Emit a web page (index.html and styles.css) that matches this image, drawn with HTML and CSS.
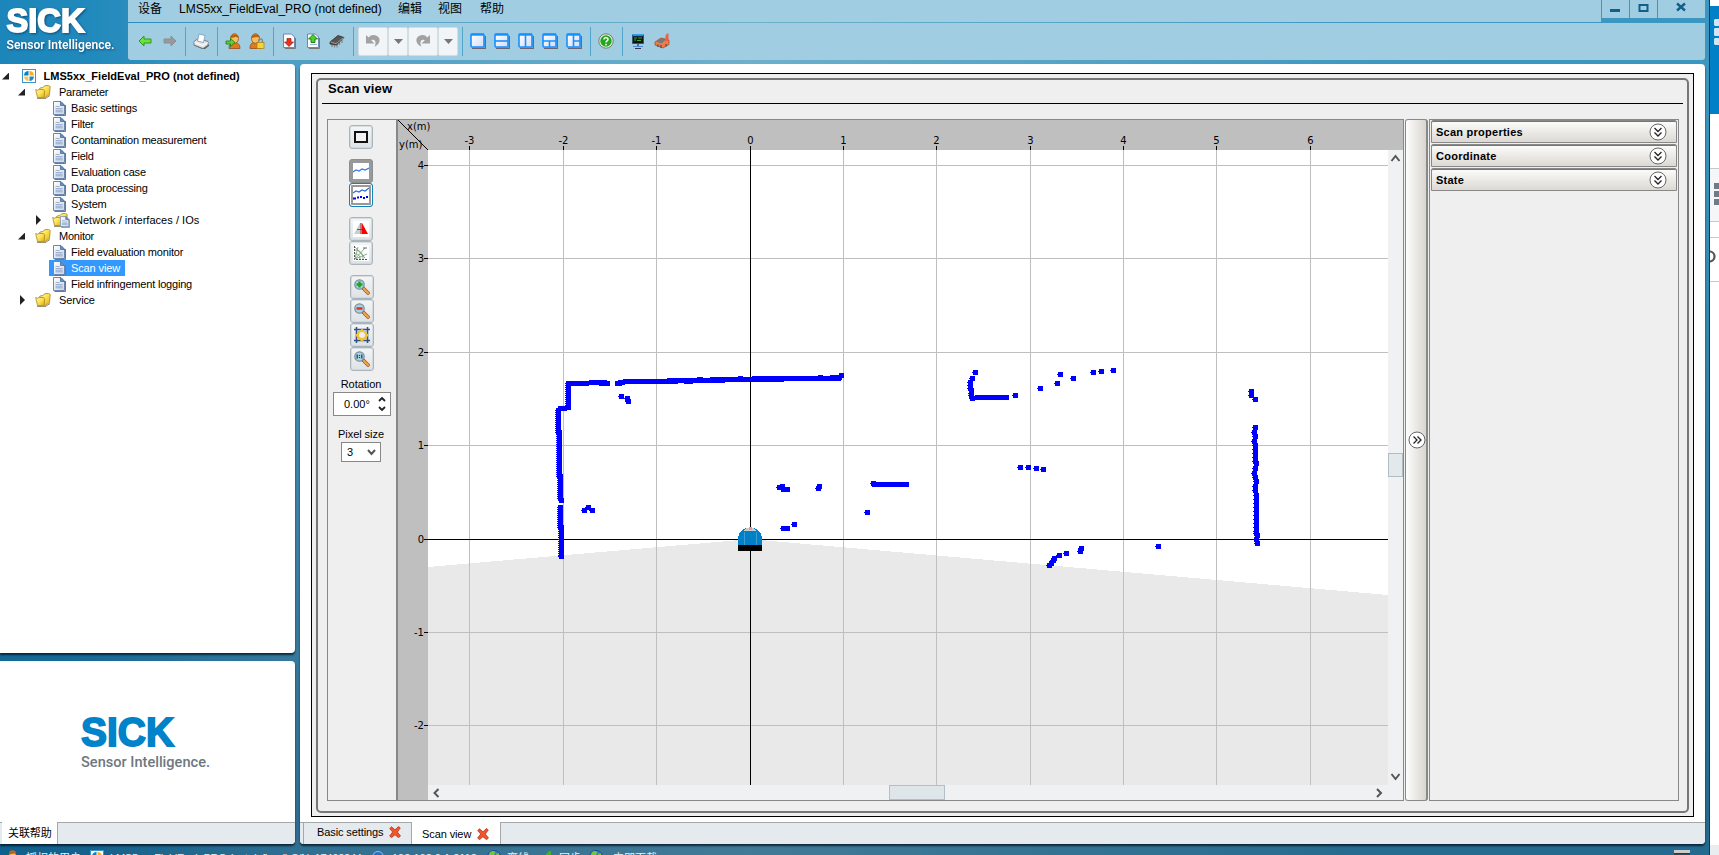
FILE: index.html
```html
<!DOCTYPE html>
<html lang="zh">
<head>
<meta charset="utf-8">
<title>LMS5xx_FieldEval_PRO</title>
<link rel="stylesheet" href="styles.css">
</head>
<body>
<svg class="defs" aria-hidden="true">
  <defs>
    <linearGradient id="gFolder" x1="0" y1="0" x2="1" y2="1"><stop offset="0" stop-color="#fffcc8"/><stop offset=".5" stop-color="#fbe04a"/><stop offset="1" stop-color="#d8aa1c"/></linearGradient>
    <linearGradient id="gPane" x1="0" y1="0" x2="1" y2="1"><stop offset="0" stop-color="#fff"/><stop offset="1" stop-color="#d4dcf8"/></linearGradient>
    <linearGradient id="gDoc" x1="0" y1="0" x2="1" y2="1"><stop offset="0" stop-color="#fff"/><stop offset="1" stop-color="#c9d6ea"/></linearGradient>
    <symbol id="doc" viewBox="0 0 13 15"><path d="M1.500 14.500h11V4" fill="none" stroke="#777" stroke-width="1"/><path d="M.5.5h7.500l3.500 3.500v9.500h-11z" fill="url(#gDoc)" stroke="#6d87ad"/><path d="M7.500.5v4h4z" fill="#6c8fc0" stroke="#4f6f9c" stroke-width=".8"/><path d="M2.500 5.500h4M2.500 7.500h7" stroke="#9fb2d0"/><path d="M2.500 8.500h7v3h-7z" fill="#a9b9d8"/></symbol>
    <symbol id="folder" viewBox="0 0 16 14"><path d="M2 13.500l8 .3 5-3.300" fill="none" stroke="#8d8d8d" stroke-width="1"/><path d="M4 5l1-2 3-.5 1.500-1.700 4-.5 1.700 1.200-.7 8-5 3.500-6-.5z" fill="url(#gFolder)" stroke="#a8841c" stroke-width=".8"/><path d="M.7 4.500l2 .8 1.300-1 4.500.4 1.200 1L9 13l-6.500-.5z" fill="url(#gFolder)" stroke="#a8841c" stroke-width=".8"/></symbol>
    <symbol id="device" viewBox="0 0 14 14"><rect x=".5" y=".5" width="13" height="13" fill="#fff" stroke="#3b93c8"/><path d="M6.500 6.500V2a4.500 4.500 0 0 0-4.500 4.500z" fill="#0083c7"/><path d="M7.500 6.500V2a4.500 4.500 0 0 1 4.500 4.500z" fill="#f5b11c"/><path d="M6.500 7.500V12A4.500 4.500 0 0 1 2 7.500z" fill="#f5c75a"/><path d="M7.500 7.500V12A4.500 4.500 0 0 0 12 7.500z" fill="#2f82c0"/></symbol>
    <symbol id="user" viewBox="0 0 16 16"><path d="M2 15.500c0-5 2-6 5-6s6 1 6 6z" fill="#e07a22" stroke="#8c4410" stroke-width=".7"/><ellipse cx="7.500" cy="5.500" rx="4" ry="4.800" fill="#f6c05a" stroke="#8c4410" stroke-width=".7"/><path d="M3.500 5C3.500 0 11.500 0 11.500 5 9 2.500 6 5 3.500 5z" fill="#b86018"/></symbol>
    <symbol id="lens" viewBox="0 0 16 16"><path d="M9 9l5 5" stroke="#a45a20" stroke-width="3.600" stroke-linecap="round"/><path d="M10 10l4 4" stroke="#f7a248" stroke-width="2.200" stroke-linecap="round"/><circle cx="5.500" cy="5.500" r="4.700" fill="#a9d2e6" stroke="#7d8f9b" stroke-width="1.200"/></symbol>
    <symbol id="close" viewBox="0 0 12 12"><path d="M2.500 .8l3.500 3L9.500.5 11.300 2 8.300 6l3.200 4-2 1.700L6 8.700l-3.500 3L.6 10 3.700 6 .7 2.500z" fill="#f2552c" stroke="#a92a10" stroke-width=".7"/></symbol>
    <symbol id="globe" viewBox="0 0 14 14"><circle cx="7" cy="7" r="6.500" fill="#2f7fd0" stroke="#1a4c86"/><path d="M2 4c2-4 5-3 6-2s-2 4-3 5-3 0-3-3zM9 4l3-1v4l-3 1z" fill="#74c442"/></symbol>
    <symbol id="chev2" viewBox="0 0 18 18"><circle cx="9" cy="9" r="8" fill="#fff" stroke="#666"/><path d="M5.500 5l3.500 3.500L12.500 5M5.500 9.500L9 13l3.500-3.500" fill="none" stroke="#222" stroke-width="1.300"/></symbol>
    <symbol id="frame" viewBox="0 0 16 16"><path d="M2 15.300h13.300V3" fill="none" stroke="#667" stroke-width="1.300"/><rect x="1" y="1" width="13" height="13" rx="1" fill="url(#gPane)" stroke="#1590ff" stroke-width="1.600"/><path d="M1 1.700h13" stroke="#1590ff" stroke-width="2"/></symbol>
  </defs>
</svg>

<div class="desktop">
  <div class="window">
    <header class="header">
      <div class="brand">
        <svg width="128" height="64" viewBox="0 0 128 64">
          <g class="brand-shadow"><text x="6.500" y="32" class="sick" font-size="33.500" textLength="78" lengthAdjust="spacingAndGlyphs">SICK</text>
          <text x="6.500" y="49" class="tag" font-size="13" textLength="108" lengthAdjust="spacingAndGlyphs">Sensor Intelligence.</text></g>
        </svg>
      </div>
      <div class="bars">
        <div class="menu-row">
          <nav class="menu">
            <span class="m1">设备</span><span class="m2">LMS5xx_FieldEval_PRO (not defined)</span><span class="m3">编辑</span><span class="m4">视图</span><span>帮助</span>
          </nav>
          <div class="winbtns">
            <span class="wb"><svg width="27" height="18"><path d="M8 9h10v3H8z" fill="#10608a"/></svg></span>
            <span class="wb"><svg width="27" height="18"><path d="M9.500 5h8v6h-8z" fill="none" stroke="#10608a" stroke-width="2"/></svg></span>
            <span class="wb wide"><svg width="47" height="18"><path d="M19 3.500l8 7M27 3.500l-8 7" stroke="#10608a" stroke-width="2.400"/></svg></span>
          </div>
        </div>
        <div class="toolbar">
          <span class="ti"><svg width="16" height="14"><path d="M2 7l5-5v3h7v4H7v3z" fill="#6fe03a" stroke="#2a9a1c"/></svg></span>
          <span class="ti fwd"><svg width="16" height="14"><path d="M14 7L9 2v3H2v4h7v3z" fill="#999" stroke="#8a8f92"/></svg></span>
          <i class="sep"></i>
          <span class="ti"><svg width="16" height="16"><path d="M1 12l10 4 5-4" fill="none" stroke="#555" stroke-width="1.200"/><path d="M1 8.500l4-3 10 3V12l-5 3.500L1 12z" fill="#e2e4e6" stroke="#777" stroke-width=".9"/><path d="M4.500 8l1.500-7 6 1.500-1.500 7z" fill="#fff" stroke="#7a98c0" stroke-width=".8"/><path d="M1.500 9.500l8.500 3 5-3" fill="none" stroke="#fff"/></svg></span>
          <i class="sep"></i>
          <span class="ti"><svg width="16" height="16"><use href="#user" x="2"/><path d="M1 8h4.500V5.500L10 9.500l-4.500 4v-2.500H1z" fill="#5fd02e" stroke="#207a18" stroke-width=".8"/></svg></span>
          <span class="ti"><svg width="16" height="16"><use href="#user" x="-1"/><path d="M9.500 10V8a2 2 0 0 1 4 0v2" fill="none" stroke="#888" stroke-width="1.300"/><rect x="8" y="9.500" width="7" height="6" fill="#f8d535" stroke="#a87c10" stroke-width=".7"/></svg></span>
          <i class="sep"></i>
          <span class="ti"><svg width="16" height="16"><path d="M4 15.500h10.500V5" fill="none" stroke="#777"/><path d="M2.500 1h8l3 3v10.500h-11z" fill="#f7faff" stroke="#6d87ad"/><path d="M6 5.500h4V9h2.500L8 13.500 3.500 9H6z" fill="#e8331c" stroke="#9c1c0c" stroke-width=".7"/></svg></span>
          <span class="ti"><svg width="16" height="16"><path d="M4 15.500h10.500V5" fill="none" stroke="#777"/><path d="M2.500 1h8l3 3v10.500h-11z" fill="#f7faff" stroke="#6d87ad"/><path d="M6 9.500h4V6h2.500L8 1.500 3.500 6H6z" fill="#4fd028" stroke="#157a10" stroke-width=".9"/><path d="M5 11.500h7" stroke="#9fb2d0"/></svg></span>
          <span class="ti"><svg width="16" height="16"><path d="M3 10v4M5.500 11v3.500M8 11v3.500M10.500 9v3M13 7v3" stroke="#888" stroke-width="1.300"/><path d="M1 9l8-6.500 6 2L7.500 12 1 11z" fill="#555" stroke="#222" stroke-width=".7"/><path d="M1.500 9l5.500 1.700L14.500 4.700" fill="none" stroke="#999"/></svg></span>
          <i class="sep"></i>
          <span class="tb b30"><svg width="18" height="16"><path d="M2 2v8.500h8.500L7.200 7.300c3.500-1.800 5.800 1.500 3.300 6.500C17 11 17.500 3.500 11 2.200 8.500 1.700 6 2.500 4.700 4.500z" fill="#a2a2a2"/></svg></span>
          <span class="tb b18"><svg width="9" height="5"><path d="M0 0h9L4.500 5z" fill="#777"/></svg></span>
          <span class="tb b30r"><svg width="18" height="16"><path d="M16 2v8.500H7.500l3.300-3.200C7.300 5.500 5 8.800 7.500 13.800 1 11 .5 3.500 7 2.200c2.500-.5 5 .3 6.300 2.300z" fill="#a2a2a2"/></svg></span>
          <span class="tb b18"><svg width="9" height="5"><path d="M0 0h9L4.500 5z" fill="#777"/></svg></span>
          <i class="sep"></i>
          <span class="ti"><svg width="16" height="16"><use href="#frame"/></svg></span>
          <span class="ti"><svg width="16" height="16"><use href="#frame"/><path d="M1 8h13" stroke="#1590ff" stroke-width="1.600"/></svg></span>
          <span class="ti"><svg width="16" height="16"><use href="#frame"/><path d="M7.500 1v13" stroke="#1590ff" stroke-width="1.600"/></svg></span>
          <span class="ti"><svg width="16" height="16"><use href="#frame"/><path d="M1 8h13M7.500 8v6" stroke="#1590ff" stroke-width="1.600"/></svg></span>
          <span class="ti"><svg width="16" height="16"><use href="#frame"/><path d="M7.500 1v13M7.500 8H14" stroke="#1590ff" stroke-width="1.600"/></svg></span>
          <i class="sep"></i>
          <span class="ti"><svg width="16" height="16"><circle cx="8" cy="8" r="7.200" fill="#e9efe9" stroke="#6f7f6f"/><circle cx="8" cy="8" r="5.700" fill="#22a81c"/><path d="M6 6.500c0-2.600 4.200-2.400 4 0 0 1.400-2 1.300-2 3M8 10.800v1.600" fill="none" stroke="#fff" stroke-width="1.500"/></svg></span>
          <i class="sep"></i>
          <span class="ti"><svg width="16" height="16"><rect x="2.500" y="2" width="11" height="8.500" fill="#111"/><path d="M2 2.200h12" stroke="#1e90e8" stroke-width="2"/><path d="M2.500 2v8.500h11V2" fill="none" stroke="#357" stroke-width="1"/><path d="M4 5h3M4 7h2M8 5h4M7 7.500h4" stroke="#2fae3a"/><path d="M8 11v3M5 15.500h6" stroke="#335" stroke-width="1.200"/><path d="M3 13.500h10" stroke="#4a8ad0"/></svg></span>
          <span class="ti"><svg width="16" height="16"><path d="M1 9l6-4 8 2v4.500l-6 3.500-8-3z" fill="#f07a4c" stroke="#a8401c" stroke-width=".7"/><path d="M2.500 8.500l5-3.500 5 1.500-5.500 4z" fill="#777"/><path d="M11.500 8V3l1.500-2.500h1.500V8z" fill="#f0603a"/><path d="M4 11.500v2.500M7 12v3M12 11v2.500" stroke="#555" stroke-width="1.300"/></svg></span>
        </div>
      </div>
    </header>

    <div class="body">
      <aside class="left">
        <section class="card tree-card">
          <ul class="tree">
            <li class="row l0"><b class="tri open"></b><svg width="14" height="14"><use href="#device"/></svg><span class="t bold">LMS5xx_FieldEval_PRO (not defined)</span></li>
            <li class="row l1"><b class="tri open"></b><svg width="16" height="14"><use href="#folder"/></svg><span class="t">Parameter</span></li>
            <li class="row l2"><svg width="13" height="15"><use href="#doc"/></svg><span class="t s-basic">Basic settings</span></li>
            <li class="row l2"><svg width="13" height="15"><use href="#doc"/></svg><span class="t">Filter</span></li>
            <li class="row l2"><svg width="13" height="15"><use href="#doc"/></svg><span class="t">Contamination measurement</span></li>
            <li class="row l2"><svg width="13" height="15"><use href="#doc"/></svg><span class="t">Field</span></li>
            <li class="row l2"><svg width="13" height="15"><use href="#doc"/></svg><span class="t s-eval">Evaluation case</span></li>
            <li class="row l2"><svg width="13" height="15"><use href="#doc"/></svg><span class="t s-eval">Data processing</span></li>
            <li class="row l2"><svg width="13" height="15"><use href="#doc"/></svg><span class="t s-eval">System</span></li>
            <li class="row net"><b class="tri"></b><svg width="18" height="15"><use href="#folder" width="16" height="14"/><use href="#doc" x="8" y="3" width="10" height="12"/></svg><span class="t">Network / interfaces / IOs</span></li>
            <li class="row l1"><b class="tri open"></b><svg width="16" height="14"><use href="#folder"/></svg><span class="t">Monitor</span></li>
            <li class="row l2"><svg width="13" height="15"><use href="#doc"/></svg><span class="t s-eval">Field evaluation monitor</span></li>
            <li class="row l2 sel"><svg width="13" height="15"><use href="#doc"/></svg><span class="t s-basic">Scan view</span></li>
            <li class="row l2"><svg width="13" height="15"><use href="#doc"/></svg><span class="t s-eval">Field infringement logging</span></li>
            <li class="row l1"><b class="tri"></b><svg width="16" height="14"><use href="#folder"/></svg><span class="t s-basic">Service</span></li>
          </ul>
        </section>
        <section class="card help-card">
          <div class="help-body">
            <svg width="150" height="62" viewBox="0 0 150 62">
              <text x="0" y="35" class="sick blue" font-size="40.500" textLength="93" lengthAdjust="spacingAndGlyphs">SICK</text>
              <text x="0" y="55.500" class="tag gray" font-size="14" textLength="129" lengthAdjust="spacingAndGlyphs">Sensor Intelligence.</text>
            </svg>
          </div>
          <div class="tabs help-tabs"><span class="tab active">关联帮助</span></div>
        </section>
      </aside>

      <main class="card main">
        <div class="page">
          <div class="frame">
            <h1 class="title">Scan view</h1>
            <div class="content">
              <div class="scan">
                <div class="tools">
                  <span class="btn"><svg width="16" height="16"><rect x="2" y="3" width="12" height="10" fill="#f2f2f2" stroke="#111" stroke-width="2"/></svg></span>
                  <span class="btn dark gap10"><svg width="16" height="16"><rect width="16" height="16" fill="#fff"/><path d="M0 9l3-2 3 1 3-2 3 1 4-2" fill="none" stroke="#2a7be8" stroke-width="1.200"/></svg></span>
                  <span class="btn dark focus"><svg width="16" height="16"><rect width="16" height="16" fill="#fff"/><path d="M0 6l3-2 3 1 3-2 3 1 4-3" fill="none" stroke="#2a6be8" stroke-width="1.200"/><path d="M0 10.500h3v2H0zM4 9.500h2v2H4zM7 9h2v2H7zM10 10h2v2h-2zM13 9h2v2h-2z" fill="#00f"/></svg></span>
                  <span class="btn gap10"><svg width="16" height="16"><rect width="16" height="16" fill="#fff"/><path d="M7 2v11H1z" fill="#ccc"/><path d="M9 2v11h6z" fill="#f00"/><path d="M7 2h2v11H7z" fill="#eaa"/><path d="M4 8.500h8M8 2v11" stroke="#444" stroke-width=".8"/></svg></span>
                  <span class="btn"><svg width="16" height="16"><rect width="16" height="16" fill="#fff"/><path d="M1.500 1v13.500H15" fill="none" stroke="#555" stroke-dasharray="2 1"/><path d="M2 14L12 3M2 14L14 9M2 14L5 2M2 5c6 0 8 4 8 9M2 9c4 0 5 2 5 5M2 2l10 11" fill="none" stroke="#7aa37a" stroke-width=".9"/><path d="M10 3h4" stroke="#666"/></svg></span>
                  <span class="btn gap10 shift"><svg width="16" height="16"><use href="#lens"/><path d="M5.500 2.500v6M2.500 5.500h6" stroke="#1fa321" stroke-width="2.400"/></svg></span>
                  <span class="btn shift"><svg width="16" height="16"><use href="#lens"/><path d="M2.500 5.500h6" stroke="#e02d17" stroke-width="2.400"/></svg></span>
                  <span class="btn shift"><svg width="16" height="16"><path d="M2.500 0v16M13.500 0v16M0 2.500h16M0 13.500h16" stroke="#33508c" stroke-width="1.600"/><path d="M8 1.500l2.500 2.500h2v2L15 8l-2.500 2.500v2h-2L8 15l-2.500-2.500h-2v-2L1 8l2.500-2V4h2z" fill="#f2c12e"/><circle cx="8" cy="8" r="3" fill="#e9eef6"/></svg></span>
                  <span class="btn shift"><svg width="16" height="16"><use href="#lens"/><path d="M3.200 3.500v4M7.800 3.500v4M5.500 4v1M5.500 6v1" stroke="#234" stroke-width="1.200"/></svg></span>
                  <label class="lbl l-rot">Rotation</label>
                  <div class="spin"><span>0.00°</span><svg width="8" height="16"><path d="M1 5l3-3 3 3M1 11l3 3 3-3" fill="none" stroke="#222" stroke-width="1.800"/></svg></div>
                  <label class="lbl l-pix">Pixel size</label>
                  <div class="select"><span>3</span><svg width="9" height="7"><path d="M1 1l3.500 4L8 1" fill="none" stroke="#555" stroke-width="2"/></svg></div>
                </div>
                <svg class="plot" id="plot" width="990" height="680" viewBox="398 120 990 680" shape-rendering="crispEdges">
                  <rect x="398" y="120" width="990" height="680" fill="#bfbfbf"/>
                  <rect x="428" y="150" width="960" height="635" fill="#fff"/>
                  <path d="M428 567L740 540H760L1388 595V785H428z" fill="#e9e9e9"/>
                  <g id="grid"></g>
                  <path d="M398.500 120.500l30 30" stroke="#000"/>
                  <g id="hits"></g>
                  <g class="sensor"><path d="M738 545v-8q2-7 8-9h8q6 2 8 9v8z" fill="#0080c8"/><path d="M746 528h8l2 3h-12z" fill="#ccc"/><path d="M749 527h3v3h-3z" fill="#e79a90"/><path d="M744.500 532v13M756.500 532v13" stroke="#3f9bd0"/><path d="M738 545h24v6h-24z" fill="#000"/></g>
                  <g class="axis"><text x="407" y="130">x(m)</text><text x="399" y="148">y(m)</text></g>
                  <g class="axis" id="labels"></g>
                  <g class="hscroll"><rect x="428" y="785" width="960" height="15" fill="#f0f1f3"/><rect x="889.500" y="785.500" width="55" height="14" fill="#dfe6ea" stroke="#b3bfc6"/><path d="M438.500 789l-4 4 4 4M1377 789l4 4-4 4" fill="none" stroke="#555" stroke-width="2" shape-rendering="auto"/></g>
                </svg>
                <div class="vscroll">
                  <svg width="15" height="635" viewBox="0 0 15 635"><path d="M3.500 11l4-5 4 5M3.500 624l4 5 4-5" fill="none" stroke="#555" stroke-width="2"/><rect x=".5" y="303.500" width="14" height="23" fill="#e2e9ec" stroke="#b0bcc2"/></svg>
                </div>
              </div>
              <div class="splitter"><svg width="18" height="18"><circle cx="9" cy="9" r="8" fill="#fff" stroke="#666"/><path d="M5.500 5.500L9 9l-3.500 3.500M9.500 5.500L13 9l-3.500 3.500" fill="none" stroke="#222" stroke-width="1.300"/></svg></div>
              <div class="props">
                <div class="prop"><span>Scan properties</span><svg width="18" height="18"><use href="#chev2"/></svg></div>
                <div class="prop"><span>Coordinate</span><svg width="18" height="18"><use href="#chev2"/></svg></div>
                <div class="prop"><span>State</span><svg width="18" height="18"><use href="#chev2"/></svg></div>
              </div>
            </div>
          </div>
        </div>
        <div class="tabs main-tabs">
          <span class="tab first"><span>Basic settings</span><svg width="12" height="12"><use href="#close"/></svg></span>
          <span class="tab active"><span>Scan view</span><svg width="12" height="12"><use href="#close"/></svg></span>
        </div>
      </main>
    </div>

    <footer class="status">
      <span class="s1"><svg width="14" height="14"><use href="#user"/></svg><span>授权的用户</span></span>
      <span class="s2"><svg width="14" height="14"><use href="#device"/></svg><span>LMS5xx_FieldEval_PRO (not defined) S/N: 17460244</span></span>
      <span class="s3"><svg width="12" height="14"><circle cx="6" cy="7" r="5.500" fill="#2a6fc4" stroke="#8fc0ee"/></svg><span>192.168.0.1:2112</span></span>
      <span class="s4"><svg width="14" height="14"><use href="#globe"/></svg><span>离线</span></span>
      <span class="s5"><svg width="14" height="14"><path d="M2 10L10 1h2v6l-6 5z" fill="#3fb52a"/></svg><span>同步</span></span>
      <span class="s6"><svg width="14" height="14"><use href="#globe"/></svg><span>立即下载</span></span>
      <span class="s7"><svg width="16" height="14"><path d="M0 0h16v3H0zM0 5h16v3H0z" fill="#ccc"/><path d="M0 3.800h16" stroke="#333" stroke-width="1.500"/></svg></span>
    </footer>
  </div>

  <div class="behind">
    <svg width="9" height="855">
      <rect width="9" height="855" fill="#fff"/><rect y="6" width="9" height="108" fill="#0080c6"/>
      <path d="M9 19H5l-1 1v5l1 1h4M9 28H5l-1 1v6l1 1h4M9 38H5l-1 1v5l1 1h4" fill="#cfe6f4"/>
      <rect y="168" width="9" height="53" fill="#f4f7f8"/>
      <path d="M0 168.500h9M0 221.500h9M0 237.500h9M0 281.500h9" stroke="#c3cace"/>
      <path d="M4 183h5v6H4zM4 191h5v6H4zM4 199h5v6H4z" fill="#6d7b8b"/>
      <circle cx="-.5" cy="256.500" r="5" fill="none" stroke="#555" stroke-width="2.200"/>
      <rect y="845" width="9" height="10" fill="#e9edef"/>
    </svg>
  </div>
</div>
<script src="plot.js"></script>
</body>
</html>
```
FILE: styles.css
```css
* { box-sizing: border-box; }
body { margin: 0; overflow: hidden; font-family: "Liberation Sans", "Noto Sans CJK SC", sans-serif; font-size: 11px; color: #000; }
svg { display: block; flex: none; }
.defs { position: absolute; width: 0; height: 0; }
.desktop { display: flex; width: 1719px; height: 855px; overflow: hidden; }
.window { width: 1710px; height: 855px; display: flex; flex-direction: column; border-right: 1px solid #123a50; overflow: hidden;
  background: linear-gradient(to bottom, rgba(0,40,70,0) 8%, rgba(0,40,70,.4) 96%), linear-gradient(to right, #1c86ba 0, #2189bc 90px, #4f9fc5 300px, #6cb0cc 750px, #3d97c0 1400px, #3c97c0 100%); }
.behind { width: 9px; }

.header { display: flex; height: 64px; flex: none; }
.brand { width: 128px; }
.brand-shadow { filter: drop-shadow(1px 1px 1px rgba(0,40,80,.6)); }
.sick { font-weight: bold; fill: #fff; stroke: #fff; stroke-width: 1.8px; }
.sick.blue { fill: #0083c8; stroke: #0083c8; }
.tag { font-family: Roboto, sans-serif; font-weight: 600; fill: #fff; }
.tag.gray { fill: #6d7880; font-weight: 500; }
.bars { width: 1577px; height: 60px; }
.menu-row { display: flex; height: 22px; }
.menu { flex: 1; display: flex; align-items: center; padding: 0 0 3px 10px; background: #a1cde2; font-size: 12px; line-height: 17px; }
.m1 { width: 41px; }
.m2 { width: 219px; }
.m3 { width: 40px; }
.m4 { width: 42px; }
.winbtns { display: flex; gap: 1px; height: 18px; padding-left: 1px; }
.wb { width: 27px; height: 18px; background: #a1cde2; }
.wb.wide { width: 47px; }
.toolbar { display: flex; align-items: center; height: 37px; margin-top: 1px; padding: 0 0 1px 5px; background: #a1cde2; border-radius: 0 0 3px 3px; }
.ti { width: 24px; height: 24px; display: grid; place-items: center; }
.ti.fwd { padding-left: 2px; }
.sep { width: 1px; height: 29px; margin: 0 3px 0 4px; background: #4fa5ca; }
.tb { height: 29px; display: grid; place-items: center; background: #f1f5f7; border: 1px solid #d3dde2; border-radius: 2px; }
.b30 { width: 30px; margin-left: 1px; }
.b30r { width: 30px; }
.b18 { width: 20px; }

.body { display: flex; gap: 5px; height: 780px; flex: none; }
.left { width: 295px; display: flex; flex-direction: column; gap: 8px; }
.card { background: #fff; border-radius: 0 4px 4px 0; box-shadow: 0 2px 2px rgba(0,15,30,.75); overflow: hidden; }
.tree-card { height: 589px; }
.help-card { height: 183px; display: flex; flex-direction: column; }
.tree { list-style: none; margin: 0; padding: 4px 0 0; }
.row { display: flex; align-items: center; height: 16px; white-space: nowrap; }
.t { letter-spacing: -.24px; line-height: 16px; }
.s-basic { letter-spacing: -.12px; }
.s-eval { letter-spacing: -.19px; }
.bold { font-weight: bold; letter-spacing: .02px; }
.tri { width: 5px; height: 10px; background: #222; clip-path: polygon(0 0, 100% 50%, 0 100%); }
.tri.open { width: 7px; height: 7px; clip-path: polygon(100% 0, 100% 100%, 0 100%); }
.l0 { padding-left: 2px; }
.l0 svg { margin: 0 7.500px 0 13px; }
.l1 { padding-left: 18px; }
.l1 .tri { margin-right: 10px; }
.l1 .tri:not(.open) { margin: 0 10px 0 2px; }
.l1 svg { margin-right: 8px; }
.l2 { padding-left: 53px; }
.l2 svg { margin-right: 5px; }
.net { padding-left: 36px; }
.net svg { margin: 0 5px 0 11px; }
.net .t { letter-spacing: .03px; }
.sel { margin-left: 49px; padding-left: 4px; width: 76px; background: #3399ff; color: #fff; }
.help-body { flex: 1; padding: 50px 0 0 81px; }
.help-body svg { overflow: visible; }
.tabs { display: flex; height: 22px; background: #e5eaee; border-top: 1px solid #a5a8aa; }
.tab { display: flex; align-items: center; gap: 6px; margin-top: -1px; height: 22px; padding-bottom: 2px; border-right: 1px solid #a5a8aa; letter-spacing: -.1px; }
.tab.active { background: #fff; }
.help-tabs { padding-left: 2px; }
.help-tabs .tab { width: 56px; padding-left: 6px; }

.main { width: 1405px; padding-top: 9px; border-radius: 4px; display: flex; flex-direction: column; justify-content: space-between; }
.page { height: 744px; width: 1383px; margin-left: 11px; padding: 4px; background: #efefef; border: 1px solid #000; }
.frame { height: 735px; border: 2px solid #777; border-radius: 5px; padding: 0 4px; }
.title { margin: 0; height: 24px; padding: 2px 0 0 6px; font-size: 13px; line-height: 14px; letter-spacing: .15px; border-bottom: 1px solid #000; }
.content { display: flex; margin: 15px 0 0 5px; height: 682px; }
.scan { width: 1077px; display: flex; border: 1px solid #888; }
.tools { width: 70px; border-right: 2px solid #888; padding: 5px 2px 0 0; display: flex; flex-direction: column; align-items: center; }
.btn { width: 24px; height: 24px; flex: none; display: grid; place-items: center; border: 1px solid #a9b4bb; border-radius: 3px; background: linear-gradient(#f3f6f7, #dce2e5); box-shadow: inset 0 0 0 1px rgba(200,208,212,.6); }
.gap10 { margin-top: 10px; }
.shift { margin-left: 2px; }
.dark { background: #999; border-color: #8a8f92; box-shadow: none; }
.focus { border-color: #1581bd; box-shadow: inset 0 0 0 1px #fff; }
.lbl { line-height: 14px; letter-spacing: -.05px; }
.l-rot { margin: 6px 0 1px; }
.spin { width: 58px; height: 24px; display: flex; align-items: center; justify-content: space-between; margin-left: 2px; padding: 0 4px 0 10px; background: #fff; border: 1px solid #888; }
.l-pix { margin: 11px 0 1px; }
.select { width: 40px; height: 20px; display: flex; align-items: center; justify-content: space-between; padding: 0 4px 0 5px; background: #fff; border: 1px solid #888; }
.axis text { font-family: "DejaVu Sans", sans-serif; font-size: 10px; fill: #000; }
.vscroll { width: 15px; height: 680px; padding-top: 30px; background: linear-gradient(#bfbfbf 30px, #f0f1f3 30px); }
.splitter { width: 23px; margin-left: 1px; display: grid; place-items: center; padding: 0 0 40px 1px; border: 1px solid #888; border-right-width: 2px; border-radius: 3px; background: linear-gradient(to right, #fdfdfd, #d9d6cf); }
.props { width: 250px; margin-left: 1px; padding: 0 1px; border: 1px solid #888; display: flex; flex-direction: column; gap: 1px; }
.prop { height: 23px; display: flex; align-items: center; justify-content: space-between; padding: 1px 9px 0 4px; font-weight: bold; border: 1px solid #888; border-radius: 2px 2px 0 0; background: linear-gradient(#fcfcfb, #dcd9d3); box-shadow: inset 0 1px 0 #777; letter-spacing: .25px; }
.main-tabs .tab { width: 89px; padding-left: 10px; }
.main-tabs .first { width: 109px; margin-left: 3px; padding-left: 13px; border-left: 1px solid #a5a8aa; }
.main-tabs .active { padding-top: 2px; padding-bottom: 0; }

.status { display: flex; height: 16px; padding: 6px 0 0 6px; color: #e8f2f8; white-space: nowrap; overflow: hidden; }
.status > span { display: flex; gap: 6px; height: 14px; line-height: 16px; flex: none; }
.status .s1 { width: 84px; }
.status .s2 { width: 282px; letter-spacing: -.22px; }
.status .s3 { width: 115px; gap: 8px; }
.status .s4 { width: 52px; }
.status .s5 { width: 50px; }
.status .s6 { width: 1085px; gap: 10px; }
```
FILE: plot.js
```js
// Draws the metre grid, the axis labels and the scanner hits.
const vert = [469, 563, 656, 750, 843, 936, 1030, 1123, 1216, 1310];
const horiz = [165, 258, 352, 445, 539, 632, 725];
let grid = '', labels = '';
const line = (d, c) => `<path d="${d}" stroke="${c}"/>`;
vert.forEach((x, i) => {
  if (x !== 750) grid += line(`M${x + .5} 150V785`, '#bfbfbf');
  labels += line(`M${x + .5} 146V150`, '#000') + `<text x="${x + .5}" y="144" text-anchor="middle">${i - 3}</text>`;
});
horiz.forEach((y, i) => {
  if (y !== 539) grid += line(`M428 ${y + .5}H1388`, '#bfbfbf');
  labels += line(`M424 ${y + .5}H428`, '#000') + `<text x="424" y="${y + 4}" text-anchor="end">${4 - i}</text>`;
});
grid += line('M750.5 150V785', '#000') + line('M428 539.5H1388', '#000');
document.getElementById('grid').innerHTML = grid;
document.getElementById('labels').innerHTML = labels;

// Single echoes, top-left corner of each 5px mark.
const dots = [[619,394],[625,396],[626,399],[582,508],[586,505],[590,508],[777,485],[780,484],[781,487],[785,487],
  [816,486],[817,484],[871,481],[865,510],[781,526],[785,526],[792,522],[839,373],[558,406],[562,406],
  [973,370],[970,376],[968,380],[968,383],[968,386],[969,388],[969,391],[969,393],[970,396],[1013,393],[1038,386],[1055,381],
  [1058,372],[1071,376],[1091,370],[1099,369],[1111,368],[1018,465],[1026,465],[1034,466],[1041,467],
  [1249,389],[1249,393],[1253,397],[1047,563],[1049,561],[1051,558],[1052,556],[1057,553],[1064,551],
  [1078,549],[1079,546],[1156,544],[1253,425],[1252,430],[1253,434],[1252,439],[1254,461],[1253,466],[1252,471],
  [1253,475],[1254,479],[1253,484],[1253,488],[1255,533],[1254,537],[1255,541],[559,498]];
// Vertical walls: x, first y, last y.
const walls = [[566,381,405],[556,408,430],[557,430,474],[558,474,496],[558,505,525],[559,525,554],[1253,443,459],[1254,493,531]];
walls.forEach(([x, a, b]) => { for (let y = a; y <= b; y += x > 1200 ? 4 : 2) dots.push([x, y]); dots.push([x, b]); });
let d = dots.map(([x, y]) => `M${x} ${y}h5v5h-5zM${x - 1} ${y + 2}h1v1h-1z`).join('');
// Horizontal walls: x start, x end, top.
const runs = [[566,589,381],[589,607,380],[599,610,381],[615,622,381],[618,625,380],[623,678,379],[667,725,378],[684,693,379],
  [697,703,377],[710,784,377],[738,743,376],[752,841,376],[818,823,375],[830,842,375],[872,909,482],[975,1009,395]];
d += runs.map(([a, b, y]) => `M${a} ${y}H${b}v5H${a}z`).join('');
document.getElementById('hits').innerHTML = `<path d="${d}" fill="#0000ff"/>`;
```
